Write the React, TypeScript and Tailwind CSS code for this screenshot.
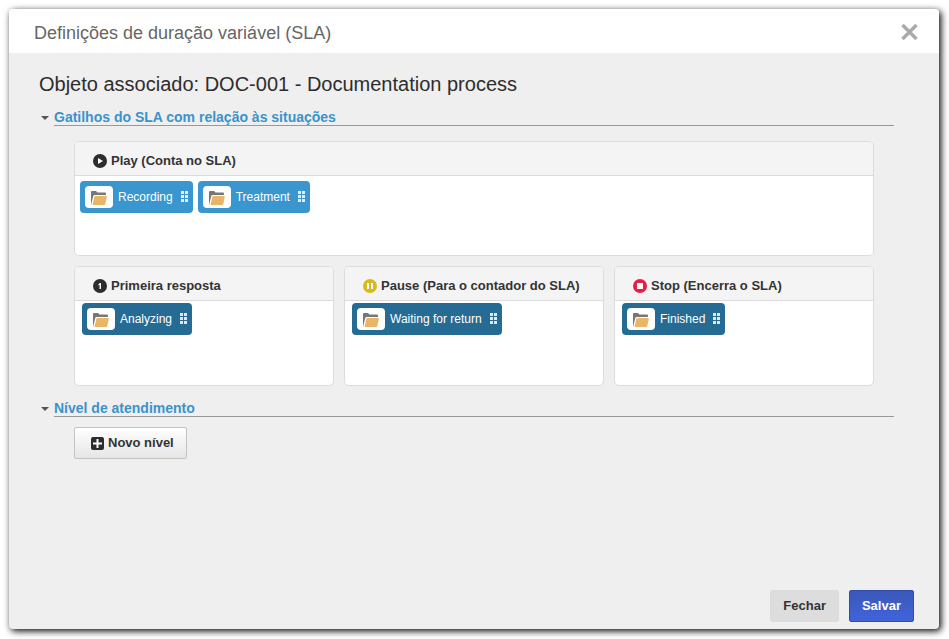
import { useState } from "react";
import type { ReactNode } from "react";
import clsx from "clsx";

type Trigger = "play" | "first" | "pause" | "stop";

function TriggerIcon({ type }: { type: Trigger }) {
    const colors = { play: "#2d2d2d", first: "#2d2d2d", pause: "#dbb91b", stop: "#e61f46" };

    return (
        <svg width="14" height="14" viewBox="0 0 14 14" aria-hidden="true" className="shrink-0">
            <circle cx="7" cy="7" r="7" fill={colors[type]} />
            {type === "play" && <path d="M5 4v6l5-3z" fill="#fff" />}
            {type === "first" && <path d="M7 4h1v6H6.600V6L5.400 6.500V5.300z" fill="#fff" />}
            {type === "pause" && <path d="M4 4h2v6H4zM8 4h2v6H8z" fill="#fff" />}
            {type === "stop" && <path d="M4 4h6v6H4z" fill="#fff" />}
        </svg>
    );
}

function FolderIcon() {
    return (
        <svg width="18" height="16" viewBox="0 0 18 16" aria-hidden="true">
            <path d="M1 15V2q0-1 1-1h4l1.500 1.500H15q1 0 1 1V5H4.500q-1 0-1.200 1z" fill="#777" />
            <path d="M5.500 6H16q1 0 .8 1l-1.500 7q-.2 1-1.200 1H2.500L4.300 7q.2-1 1.200-1z" fill="#e9b566" />
        </svg>
    );
}

function GripIcon() {
    return (
        <svg width="7" height="12" viewBox="0 0 7 12" aria-hidden="true" fill="#fff" shapeRendering="crispEdges">
            <path d="M0 0h3v3H0zM4 0h3v3H4zM0 4h3v3H0zM4 4h3v3H4zM0 8h3v3H0zM4 8h3v3H4z" opacity="0.85" />
        </svg>
    );
}

function Chip({ label, dark }: { label: string; dark?: boolean }) {
    return (
        <div
            className={clsx(
                "flex h-8 cursor-move items-center rounded px-[5px] text-white",
                dark ? "bg-[#256b94]" : "bg-[#3996ce]"
            )}
        >
            <span className="flex h-[22px] w-7 items-center justify-center rounded bg-white pt-[2px]">
                <FolderIcon />
            </span>
            <span className="ml-[5px] mr-2 text-xs">{label}</span>
            <GripIcon />
        </div>
    );
}

function Panel({ type, title, children }: { type: Trigger; title: string; children: ReactNode }) {
    return (
        <div
            className={clsx(
                "overflow-hidden rounded-[5px] border border-[#dcdcdc] bg-white",
                type === "play" ? "min-h-[115px]" : "min-h-[120px]"
            )}
        >
            <h3 className="flex h-[34px] items-center gap-1 border-b border-[#dcdcdc] bg-[#f4f4f4] pl-[18px] pt-1 text-[13px] font-bold text-[#333]">
                <TriggerIcon type={type} />
                {title}
            </h3>
            <div className={clsx("flex flex-wrap gap-[5px]", type === "play" ? "p-[5px]" : "px-[7px] py-[2px]")}>
                {children}
            </div>
        </div>
    );
}

function Section({ title, children }: { title: string; children: ReactNode }) {
    const [open, setOpen] = useState(true);

    return (
        <section>
            <h2>
                <button
                    type="button"
                    aria-expanded={open}
                    onClick={() => setOpen(o => !o)}
                    className="flex w-full items-center gap-[5px] text-left text-sm leading-4 font-bold text-[#3a93cc]"
                >
                    <svg width="8" height="4" viewBox="0 0 8 4" aria-hidden="true">
                        <path d="M0 0h8L4 4z" fill="#555" />
                    </svg>
                    <span className="flex-1 border-b border-[#999]">{title}</span>
                </button>
            </h2>
            {open && children}
        </section>
    );
}

export default function App() {
    return (
        <div className="flex min-h-screen bg-white pt-[9px] pr-[10px] pb-[10px] pl-[9px] font-['Liberation_Sans',Arial,sans-serif] text-[#333]">
            <div
                role="dialog"
                aria-labelledby="dialog-title"
                className="flex flex-1 flex-col overflow-hidden rounded-[4px] bg-[#efefef] shadow-[2px_2px_7px_0px_#000]"
            >
                <header className="flex h-11 items-center justify-between bg-white pr-5 pl-[25px]">
                    <h1 id="dialog-title" className="pt-1 text-lg text-[#666]">
                        Definições de duração variável (SLA)
                    </h1>
                    <button type="button" aria-label="Fechar janela" className="pt-[2px]">
                        <svg width="19" height="18" viewBox="0 0 19 18" aria-hidden="true">
                            <path d="M2.500 2l14 14M16.500 2l-14 14" stroke="#aaa" strokeWidth="3.500" />
                        </svg>
                    </button>
                </header>

                <main className="flex-1 pt-[17px] pr-[45px] pl-8">
                    <p className="mb-[11px] -ml-[2px] text-xl leading-7 text-[#2d2d2d]">
                        Objeto associado: DOC-001 - Documentation process
                    </p>

                    <Section title="Gatilhos do SLA com relação às situações">
                        <div className="mt-[15px] mr-5 ml-[33px] grid grid-cols-3 gap-[10px]">
                            <div className="col-span-3">
                                <Panel type="play" title="Play (Conta no SLA)">
                                    <Chip label="Recording" />
                                    <Chip label="Treatment" />
                                </Panel>
                            </div>
                            <Panel type="first" title="Primeira resposta">
                                <Chip label="Analyzing" dark />
                            </Panel>
                            <Panel type="pause" title="Pause (Para o contador do SLA)">
                                <Chip label="Waiting for return" dark />
                            </Panel>
                            <Panel type="stop" title="Stop (Encerra o SLA)">
                                <Chip label="Finished" dark />
                            </Panel>
                        </div>
                    </Section>

                    <div className="mt-[14px]">
                        <Section title="Nível de atendimento">
                            <button
                                type="button"
                                className="mt-[10px] ml-[33px] flex h-8 items-center gap-1 rounded-[2px] border border-[#c3c3c3] bg-linear-to-b from-white to-[#e6e6e6] pr-3 pl-4 text-[13px] font-bold text-[#333]"
                            >
                                <svg width="13" height="13" viewBox="0 0 13 13" aria-hidden="true">
                                    <rect width="13" height="13" rx="2" fill="#2d2d2d" />
                                    <path d="M6.500 2v9M2 6.500h9" stroke="#fff" strokeWidth="2" />
                                </svg>
                                Novo nível
                            </button>
                        </Section>
                    </div>
                </main>

                <footer className="flex justify-end gap-[10px] pr-[25px] pb-[7px] text-[13px] font-bold">
                    <button type="button" className="h-8 rounded-[2px] bg-[#dddddd] px-[13px] text-[#333]">
                        Fechar
                    </button>
                    <button
                        type="button"
                        className="h-8 rounded-[2px] border border-[#2f4fb0] bg-linear-to-b from-[#3b58b8] to-[#4163dc] px-3 text-white"
                    >
                        Salvar
                    </button>
                </footer>
            </div>
        </div>
    );
}
